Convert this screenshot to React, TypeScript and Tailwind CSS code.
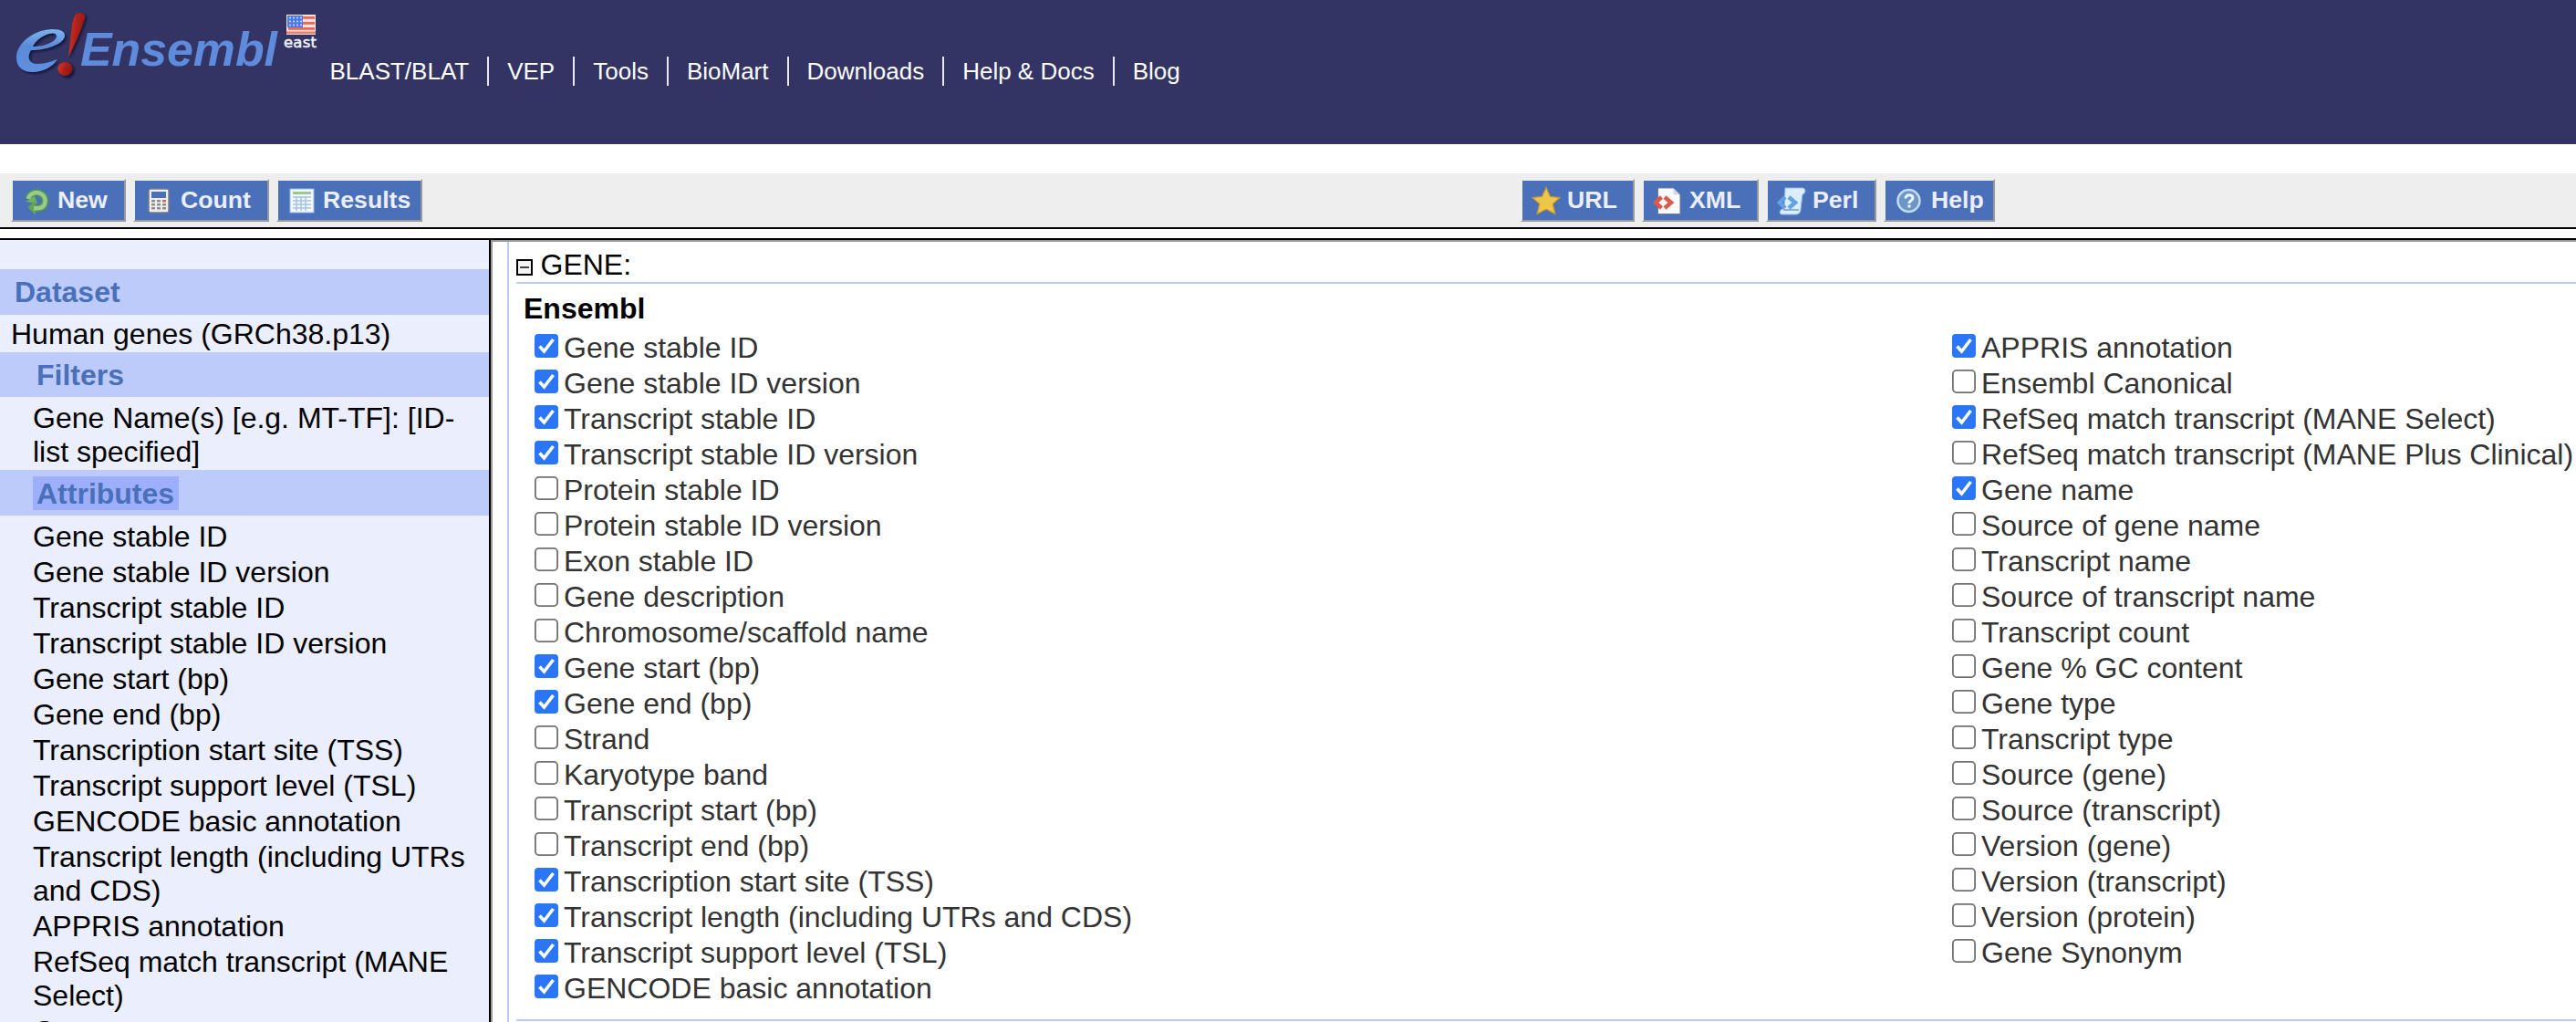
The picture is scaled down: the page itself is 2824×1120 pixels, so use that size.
import React from 'react';

const nav = ['BLAST/BLAT', 'VEP', 'Tools', 'BioMart', 'Downloads', 'Help & Docs', 'Blog'];

const attributes = [
  'Gene stable ID', 'Gene stable ID version', 'Transcript stable ID', 'Transcript stable ID version',
  'Gene start (bp)', 'Gene end (bp)', 'Transcription start site (TSS)', 'Transcript support level (TSL)',
  'GENCODE basic annotation', 'Transcript length (including UTRs and CDS)', 'APPRIS annotation',
  'RefSeq match transcript (MANE Select)', 'Gene name',
];

type Item = [string, boolean];

const left: Item[] = [
  ['Gene stable ID', true], ['Gene stable ID version', true], ['Transcript stable ID', true],
  ['Transcript stable ID version', true], ['Protein stable ID', false], ['Protein stable ID version', false],
  ['Exon stable ID', false], ['Gene description', false], ['Chromosome/scaffold name', false],
  ['Gene start (bp)', true], ['Gene end (bp)', true], ['Strand', false], ['Karyotype band', false],
  ['Transcript start (bp)', false], ['Transcript end (bp)', false], ['Transcription start site (TSS)', true],
  ['Transcript length (including UTRs and CDS)', true], ['Transcript support level (TSL)', true],
  ['GENCODE basic annotation', true],
];

const right: Item[] = [
  ['APPRIS annotation', true], ['Ensembl Canonical', false], ['RefSeq match transcript (MANE Select)', true],
  ['RefSeq match transcript (MANE Plus Clinical)', false], ['Gene name', true], ['Source of gene name', false],
  ['Transcript name', false], ['Source of transcript name', false], ['Transcript count', false],
  ['Gene % GC content', false], ['Gene type', false], ['Transcript type', false], ['Source (gene)', false],
  ['Source (transcript)', false], ['Version (gene)', false], ['Version (transcript)', false],
  ['Version (protein)', false], ['Gene Synonym', false],
];

function Logo() {
  return (
    <svg width="380" height="100" viewBox="0 0 380 100" className="block">
      <defs>
        <linearGradient id="blue" x1="0" y1="0" x2="0" y2="1">
          <stop offset="0" stopColor="#7db4ee" />
          <stop offset="0.4" stopColor="#5b8ad9" />
          <stop offset="1" stopColor="#5f8fe0" />
        </linearGradient>
        <linearGradient id="red" x1="0" y1="0" x2="1" y2="0.3">
          <stop offset="0" stopColor="#e0392b" />
          <stop offset="0.5" stopColor="#b32218" />
          <stop offset="1" stopColor="#8c1a14" />
        </linearGradient>
        <filter id="soft" x="-20%" y="-20%" width="140%" height="140%">
          <feGaussianBlur stdDeviation="1.2" />
        </filter>
      </defs>
      <g>
        <g transform="translate(2 2)" opacity="0.75" filter="url(#soft)" fill="#10102a">
          <path d="M18 63C18 47 38 32 58 32C67 32 72 35 71 40C69 49 50 55 34 55C29 63 32 70 41 70C50 70 57 67 63 65C59 72 48 79 36 79C24 79 18 73 18 63ZM36 51C49 51 61 46 62 40C62 36 58 36 54 37C46 39 39 45 36 51Z" fillRule="evenodd" />
          <path d="M87 14C82 14 80 20 79 28L75 62C82 50 90 30 93 20C94 15 91 13 87 14Z" />
          <circle cx="72" cy="75.500" r="8" />
        </g>
        <path d="M18 63C18 47 38 32 58 32C67 32 72 35 71 40C69 49 50 55 34 55C29 63 32 70 41 70C50 70 57 67 63 65C59 72 48 79 36 79C24 79 18 73 18 63ZM36 51C49 51 61 46 62 40C62 36 58 36 54 37C46 39 39 45 36 51Z" fill="url(#blue)" fillRule="evenodd" />
        <path d="M88 14C82 14 80 20 79 28L75 62C82 50 90 30 93 21C94 16 92 14 88 14Z" fill="url(#red)" />
        <ellipse cx="71.500" cy="75.500" rx="8" ry="7.500" fill="url(#red)" />
      </g>
      <text x="88" y="72" textLength="216" lengthAdjust="spacingAndGlyphs" fontFamily="Liberation Sans, sans-serif" fontWeight="700" fontStyle="italic" fontSize="52" fill="#5f8bdc">Ensembl</text>
      <rect x="314" y="16" width="32" height="22" fill="#f6e3dc" />
      {[18, 24, 30].map((y) => (
        <rect key={y} x="316" y={y} width="29" height="2.800" fill="#e8685c" />
      ))}
      <rect x="314" y="34.500" width="32" height="2.500" fill="#e8806c" />
      <rect x="315" y="17" width="17" height="13" fill="#4b7ae8" />
      {[20, 24, 28].map((y) =>
        [318, 322, 326, 330].map((x) => <circle key={x + '-' + y} cx={x} cy={y - 0.5} r="0.900" fill="#e4ecff" />)
      )}
      <text x="311" y="51.500" textLength="36" lengthAdjust="spacing" fontFamily="DejaVu Sans, sans-serif" fontSize="16.500" fill="#f2f2f6" stroke="#f2f2f6" strokeWidth="0.500">east</text>
    </svg>
  );
}

function Icon({ name }: { name: string }) {
  return (
    <svg width="32" height="32" viewBox="0 0 32 32" className="block shrink-0">
      {name === 'New' && (
        <>
          <path d="M7 14C9 7 17 5 22 9C28 14 26 23 19 24L14 24.500" fill="none" stroke="#4f9a48" strokeWidth="7.500" />
          <path d="M4 17L17 19L14 11Z" fill="#6fb062" />
          <path d="M6 23L15 16V31.500Z" fill="#5fa552" />
          <path d="M7 14C9 7 17 5 22 9C28 14 26 23 19 24L13 24.500" fill="none" stroke="#9acb8c" strokeWidth="4.500" />
        </>
      )}
      {name === 'Count' && (
        <>
          <rect x="5" y="3" width="22" height="26" rx="2" fill="#f0f0f0" stroke="#777b85" strokeWidth="1.500" />
          <rect x="8" y="6" width="16" height="7" fill="#4a70b8" />
          {[15, 19, 23].map((y) =>
            [8, 14, 20].map((x) => (
              <rect key={x + '-' + y} x={x} y={y} width="4" height="2.500" fill={x === 20 && y === 15 ? '#e0604a' : '#8e8e8e'} />
            ))
          )}
        </>
      )}
      {name === 'Results' && (
        <>
          <rect x="3" y="3" width="26" height="26" fill="#f4faff" stroke="#8fb8e4" />
          <rect x="6" y="6" width="20" height="3" fill="#9cc98c" />
          <path d="M6 12H26M6 16H26M6 20H26M6 24H26M10 11V27M15 11V27M20 11V27" stroke="#a5c2e6" strokeWidth="1.500" fill="none" />
        </>
      )}
      {name === 'URL' && (
        <path d="M16 1.500L20.500 11.500L31 12.500L23.200 19.500L26 30.500L16 25.200L6 30.500L8.800 19.500L1 12.500L11.500 11.500Z" fill="#eec64a" stroke="#c9962c" strokeWidth="1.200" />
      )}
      {name === 'XML' && (
        <>
          <path d="M5.500 2H22.500L30 9.500V30.500H5.500Z" fill="#fafafa" stroke="#6f7c98" />
          <path d="M22.500 2.500V9.500H29.500Z" fill="#d5dae2" />
          <path d="M9.500 12L3 18L9.500 24M13 12L20 18L13 24" fill="none" stroke="#dc5a4c" strokeWidth="4.500" />
        </>
      )}
      {name === 'Perl' && (
        <>
          <path d="M9 2H28C32 2 32 8 28 9L26 25C26 29 24 31 20 31H5C2 30 3 26 6 25H8Z" fill="#dceefc" stroke="#8fbce8" />
          <path d="M7 26H24" stroke="#7fa9d6" strokeWidth="1.800" />
          <path d="M9 12L3 18L9 24M13 12L20 18L13 24" fill="none" stroke="#62a2e4" strokeWidth="4.500" />
        </>
      )}
      {name === 'Help' && (
        <>
          <circle cx="15.500" cy="16" r="12" fill="#6c96c8" stroke="#c3dcf0" strokeWidth="2.500" />
          <path d="M12 13.500C12 8.500 20 8.500 20 13C20 16 16 15.500 16 19" fill="none" stroke="#eef5fb" strokeWidth="3" />
          <rect x="14.500" y="20.500" width="3" height="3" fill="#eef5fb" />
        </>
      )}
    </svg>
  );
}

function ToolButton({ name, box }: { name: string; box: string }) {
  return (
    <button
      className={
        'flex h-[47px] items-center border-2 border-t-[#eee] border-r-[#999] border-b-[#999] border-l-[#eee] bg-[#4a70b9] pl-[10px] text-[26.67px] leading-none font-bold text-[#eaeefd] ' +
        box
      }
    >
      <Icon name={name} />
      <span className="whitespace-nowrap">{name}</span>
    </button>
  );
}

function Check({ item }: { item: Item }) {
  const [label, on] = item;
  return (
    <label className="flex h-[39px] text-[#333]">
      <svg width="26" height="26" viewBox="0 0 26 26" className="mt-[3px] mr-[6px] block shrink-0">
        {on ? (
          <>
            <rect width="26" height="26" rx="4" fill="#2a76f6" />
            <path d="M5.500 13.500L10.500 19L20.500 6" fill="none" stroke="#fff" strokeWidth="3.600" />
          </>
        ) : (
          <rect x="0.900" y="0.900" width="24.200" height="24.200" rx="4" fill="#fff" stroke="#707070" strokeWidth="1.800" />
        )}
      </svg>
      <span className="leading-[37px] whitespace-nowrap">{label}</span>
    </label>
  );
}

export default function App() {
  return (
    <div className="flex h-[1120px] w-[2824px] flex-col overflow-hidden bg-white font-['Liberation_Sans',Arial,sans-serif] text-[32px] leading-[37px] text-black">
      <header className="flex h-[158px] shrink-0 bg-[#333464]">
        <div className="w-[341.5px] shrink-0">
          <Logo />
        </div>
        <nav className="mt-[62px] flex h-8 items-center text-[26px] leading-8 text-white">
          {nav.map((n, i) => (
            <a key={n} className={'px-5 whitespace-nowrap ' + (i ? 'border-l-2 border-[#e8e8f0]' : '')}>
              {n}
            </a>
          ))}
        </nav>
      </header>
      <div className="mt-8 flex h-[61px] shrink-0 border-b-2 border-black bg-[#eee] pt-[6px]">
        <div className="flex w-[1667px] shrink-0 gap-2 pl-3">
          <ToolButton name="New" box="w-[126px] gap-[7px]" />
          <ToolButton name="Count" box="w-[149px] gap-2" />
          <ToolButton name="Results" box="w-[160px] gap-[7px]" />
        </div>
        <div className="flex gap-2">
          <ToolButton name="URL" box="w-[125px] gap-[7px]" />
          <ToolButton name="XML" box="w-[128px] gap-2" />
          <ToolButton name="Perl" box="w-[121px] gap-[7px]" />
          <ToolButton name="Help" box="w-[122px] gap-2" />
        </div>
      </div>
      <div className="mt-[10px] flex min-h-0 flex-1 border-t-2 border-black">
        <aside className="w-[538px] shrink-0 overflow-hidden border-r-2 border-black bg-[#eaeefd] pt-8">
          <h2 className="h-[50px] bg-[#bdcbfb] pt-[7px] pl-[16px] font-bold text-[#4a70b9]">Dataset</h2>
          <p className="h-[41px] pt-[3px] pl-[12px]">Human genes (GRCh38.p13)</p>
          <h2 className="h-[49px] bg-[#bdcbfb] pt-[7px] pl-[40px] font-bold text-[#4a70b9]">Filters</h2>
          <p className="h-[80px] pt-[5px] pr-6 pl-[36px]">Gene Name(s) [e.g. MT-TF]: [ID-list specified]</p>
          <h2 className="flex h-[50px] bg-[#bdcbfb] pt-[7px] pl-[36px] font-bold text-[#4a70b9]">
            <span className="h-[37px] w-[160px] bg-[#9daffb] pl-1 leading-[38px]">Attributes</span>
          </h2>
          <ul className="flex flex-col gap-[2px] pt-[5px] pr-5 pl-[36px]">
            {attributes.map((a) => (
              <li key={a}>{a}</li>
            ))}
          </ul>
        </aside>
        <main className="flex min-w-0 flex-1 border-t-2 border-l-2 border-[#999]">
          <section className="ml-4 flex min-w-0 flex-1 flex-col border-l-2 border-[#bdcbfb] pl-2">
            <div className="flex h-[46px] shrink-0 border-b-2 border-[#bdcbfb] pt-[7px]">
              <svg width="18" height="18" viewBox="0 0 18 18" className="mt-[12px] mr-[8.5px] block">
                <rect x="1" y="1" width="16" height="16" fill="#f4f4f4" stroke="#000" strokeWidth="2" />
                <path d="M4 9H14" stroke="#444" strokeWidth="2" />
              </svg>
              <span>GENE:</span>
            </div>
            <div className="h-[808px] w-full shrink-0 overflow-hidden border-b-2 border-[#bdcbfb] pt-[9px]">
              <h3 className="h-[43px] pl-[8px] font-bold">Ensembl</h3>
              <div className="flex pl-[20px]">
                <div className="w-[1554px] shrink-0">
                  {left.map((i) => (
                    <Check key={i[0]} item={i} />
                  ))}
                </div>
                <div>
                  {right.map((i) => (
                    <Check key={i[0]} item={i} />
                  ))}
                </div>
              </div>
            </div>
          </section>
        </main>
      </div>
    </div>
  );
}
